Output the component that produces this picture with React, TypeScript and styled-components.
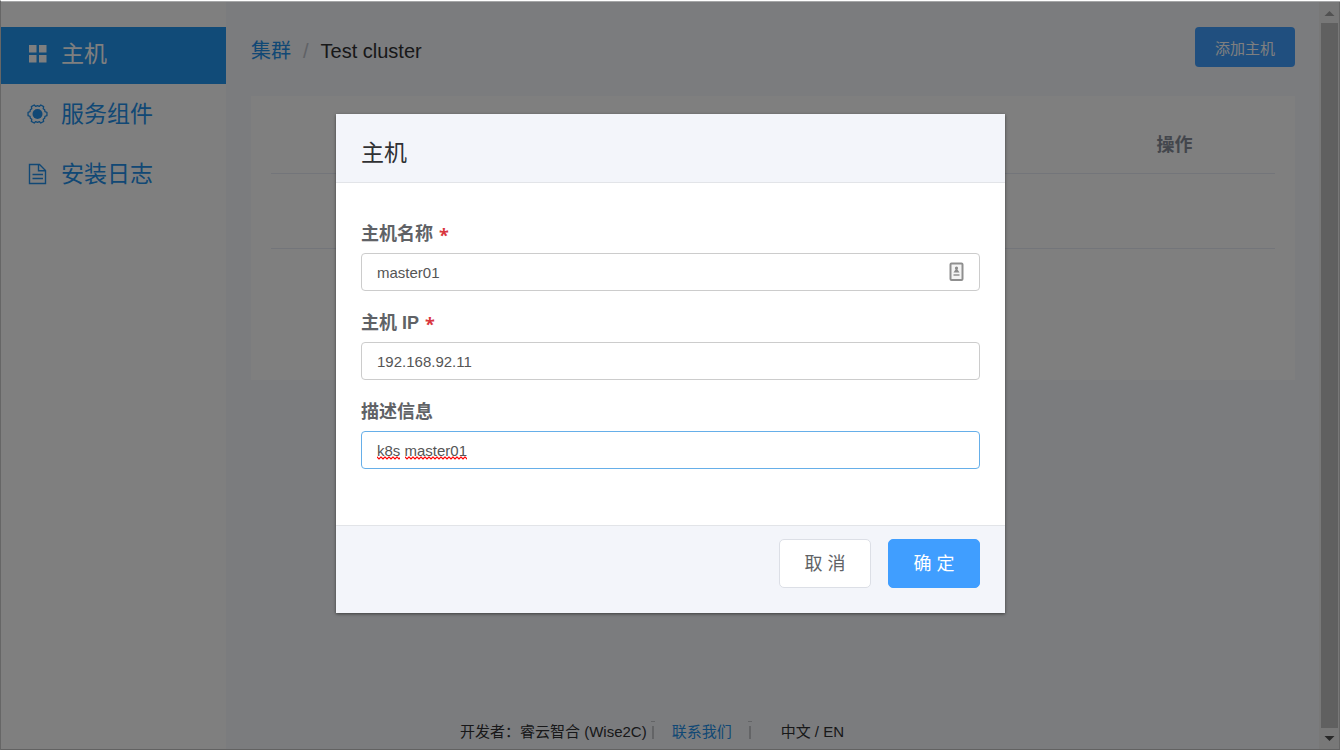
import React from 'react';
import styled, { createGlobalStyle, css } from 'styled-components';

const GlobalStyle = createGlobalStyle`
  * { box-sizing: border-box; }
  body {
    margin: 0;
    font-family: "Liberation Sans", "Noto Sans CJK SC", sans-serif;
    font-size: 15px;
    color: #303133;
  }
  button, input { font-family: inherit; margin: 0; }
  a { text-decoration: none; color: #2290ea; }
`;

const Frame = styled.div`
  position: relative;
  display: flex;
  min-height: 100vh;
  background: #f6f8fc;
  border-top: 1px solid #ffffff;
  border-left: 1px solid #666666;
`;

const Sidebar = styled.nav`
  flex: 0 0 225px;
  padding-top: 26px;
  background: #ffffff;
`;

const Menu = styled.ul`
  display: flex;
  flex-direction: column;
  gap: 3px;
  margin: 0;
  padding: 0;
  list-style: none;
`;

const MenuLink = styled.a<{ $active?: boolean }>`
  display: flex;
  align-items: center;
  gap: 12px;
  height: 57px;
  padding: 0 0 4px 26px;
  font-size: 23px;
  line-height: 34px;
  ${(p) =>
    p.$active &&
    css`
      background: #2296f0;
      color: #ffffff;
    `}
  svg { flex: none; }
`;

const Main = styled.main`
  flex: 1;
  display: flex;
  flex-direction: column;
  min-width: 0;
  padding: 26px 24px 0 25px;
`;

const TopBar = styled.header`
  display: flex;
  align-items: center;
  justify-content: space-between;
  height: 40px;
  margin-bottom: 29px;
`;

const Breadcrumb = styled.nav`
  display: flex;
  align-items: center;
  gap: 12px;
  padding-top: 8px;
  font-size: 20px;
  line-height: 30px;
`;

const Slash = styled.span`
  color: #c0c4cc;
`;

const AddButton = styled.button`
  width: 100px;
  height: 40px;
  border: 0;
  border-radius: 4px;
  background: #409eff;
  color: #ffffff;
  font-size: 15px;
  padding: 0;
`;

const Card = styled.section`
  min-height: 284px;
  padding: 20px;
  background: #ffffff;
`;

const Table = styled.table`
  width: 100%;
  table-layout: fixed;
  border-collapse: separate;
  border-spacing: 0;
  th, td {
    padding: 0;
    border-bottom: 1px solid #e6ebf5;
    text-align: center;
  }
  th {
    height: 58px;
    font-size: 18px;
    line-height: 26px;
    color: #878d99;
  }
  td { height: 75px; }
`;

const PageFooter = styled.footer`
  display: flex;
  align-items: center;
  margin: auto auto 6px 209px;
  white-space: nowrap;
  line-height: 24px;
`;

const Divider = styled.span`
  position: relative;
  width: 2px;
  height: 13px;
  margin: 0 18px 0 5px;
  background: #c6c8cc;
  &::before {
    content: "";
    position: absolute;
    left: -1px;
    top: -5px;
    width: 4px;
    height: 1px;
    background: #c6c8cc;
  }
  &:last-of-type { margin: 0 30px 0 17px; }
`;

const ScrollTrack = styled.div`
  display: flex;
  flex-direction: column;
  flex: 0 0 21px;
  padding: 0 1px 0 2px;
  background: #f1f1f1;
  border-right: 1px solid #cccccc;
  svg { display: block; flex: none; }
`;

const ScrollThumb = styled.div`
  flex: 1;
  background: #c1c1c1;
`;

const Overlay = styled.div`
  position: absolute;
  inset: 0;
  display: flex;
  justify-content: center;
  align-items: flex-start;
  padding-top: 112px;
  background: rgba(0, 0, 0, 0.5);
  border-top: 1px solid #a5a6a7;
  border-bottom: 1px solid #626262;
`;

const Dialog = styled.form`
  width: 669px;
  max-width: 100%;
  background: #ffffff;
  box-shadow: 0 1px 3px rgba(0, 0, 0, 0.5);
`;

const DialogHeader = styled.header`
  padding: 22px 25px 12px;
  background: #f3f5fa;
  border-bottom: 1px solid #e2e4e8;
`;

const DialogTitle = styled.h2`
  margin: 0;
  font-size: 23px;
  font-weight: 400;
  line-height: 34px;
`;

const DialogBody = styled.div`
  display: flex;
  flex-direction: column;
  gap: 17px;
  padding: 36px 25px 56px;
`;

const Field = styled.div`
  display: flex;
  flex-direction: column;
  gap: 3px;
`;

const Label = styled.label`
  display: flex;
  font-size: 18px;
  font-weight: 700;
  line-height: 31px;
  color: #606266;
`;

const Required = styled.span`
  padding-top: 2px;
  margin-left: 6px;
  line-height: 29px;
  font-family: "Open Sans", "Noto Sans", sans-serif;
  color: #d9363e;
`;

const InputWrap = styled.div`
  position: relative;
`;

const Input = styled.input<{ $focused?: boolean }>`
  display: block;
  width: 100%;
  height: 38px;
  padding: 0 15px;
  border: 1px solid ${(p) => (p.$focused ? '#66afe9' : '#cccccc')};
  border-radius: 4px;
  background: #ffffff;
  color: #555555;
  font-size: 15px;
  outline: none;
`;

const InputIcon = styled.span`
  position: absolute;
  right: 16px;
  top: 9px;
  svg { display: block; }
`;

const SpellMarks = styled.svg`
  position: absolute;
  left: 16px;
  top: 25px;
`;

const DialogFooter = styled.footer`
  display: flex;
  justify-content: flex-end;
  gap: 17px;
  padding: 13px 25px 25px;
  background: #f3f5fa;
  border-top: 1px solid #e2e4e8;
`;

const DialogButton = styled.button<{ $primary?: boolean }>`
  width: 92px;
  height: 49px;
  padding: 0 0 3px;
  border: 1px solid ${(p) => (p.$primary ? '#409eff' : '#dcdfe6')};
  border-radius: 5px;
  background: ${(p) => (p.$primary ? '#409eff' : '#ffffff')};
  color: ${(p) => (p.$primary ? '#ffffff' : '#606266')};
  font-size: 18px;
`;

const GridIcon = () => (
  <svg width="22" height="22" viewBox="0 0 22 22" fill="currentColor" aria-hidden="true">
    <path d="M2 2h7.5v7.5H2zM12 2h7.5v7.5H12zM2 12h7.5v7.5H2zM12 12h7.5v7.5H12z" />
  </svg>
);

// Six teeth, one every 60 degrees: [angle offset, radius] for each corner.
const toothCorners = [
  [-17, 7.8],
  [-10, 9.6],
  [10, 9.6],
  [17, 7.8],
  [30, 8.3],
];
const gearPoints = [0, 60, 120, 180, 240, 300]
  .flatMap((base) =>
    toothCorners.map(([offset, radius]) => {
      const angle = ((base + offset) * Math.PI) / 180;
      return `${(10.5 + radius * Math.cos(angle)).toFixed(2)},${(11 + radius * Math.sin(angle)).toFixed(2)}`;
    }),
  )
  .join(' ');

const GearIcon = () => (
  <svg width="22" height="22" viewBox="0 0 22 22" aria-hidden="true">
    <polygon points={gearPoints} fill="none" stroke="currentColor" strokeWidth="1.3" strokeLinejoin="round" />
    <circle cx="10.5" cy="11" r="5" fill="currentColor" />
  </svg>
);

const DocumentIcon = () => (
  <svg width="22" height="22" viewBox="0 0 22 22" fill="none" stroke="currentColor" strokeWidth="1.4" aria-hidden="true">
    <path d="M2.5 1.5h10l6 6V20.5h-16z M11.5 1.5v6.2h6.8 M5.5 11.5h10.5 M5.5 15.5h10.5" />
  </svg>
);

const AutofillIcon = () => (
  <svg width="15" height="20" viewBox="0 0 15 20" aria-hidden="true">
    <rect x="1.5" y="1.5" width="12" height="16.5" rx="1" fill="#f4f4f4" stroke="#8f8f8f" strokeWidth="2" />
    <circle cx="7.5" cy="6" r="1.6" fill="#8c8c8c" />
    <path d="M4.5 10.5 7.5 6l3 4.5z" fill="#8c8c8c" />
    <path d="M4.5 13h6" stroke="#aaaaaa" strokeWidth="2" />
  </svg>
);

const SpellWave = () => (
  <SpellMarks width="92" height="4" viewBox="0 0 92 4" aria-hidden="true">
    <defs>
      <pattern id="wave" width="4" height="4" patternUnits="userSpaceOnUse">
        <path d="M-1 .5 L0 1 L2 3 L4 1 L5 0" fill="none" stroke="#ff0000" strokeWidth="1.2" />
      </pattern>
    </defs>
    <rect x="0" width="23" height="4" fill="url(#wave)" />
    <rect x="28" width="62" height="4" fill="url(#wave)" />
  </SpellMarks>
);

const menu = [
  { text: '主机', icon: <GridIcon />, active: true },
  { text: '服务组件', icon: <GearIcon /> },
  { text: '安装日志', icon: <DocumentIcon /> },
];

export default function App() {
  return (
    <>
      <GlobalStyle />
      <Frame>
        <Sidebar>
          <Menu>
            {menu.map((item) => (
              <li key={item.text}>
                <MenuLink href="#" $active={item.active}>
                  {item.icon}
                  {item.text}
                </MenuLink>
              </li>
            ))}
          </Menu>
        </Sidebar>
        <Main>
          <TopBar>
            <Breadcrumb>
              <a href="#">集群</a>
              <Slash>/</Slash>
              <span>Test cluster</span>
            </Breadcrumb>
            <AddButton type="button">添加主机</AddButton>
          </TopBar>
          <Card>
            <Table>
              <thead>
                <tr>
                  <th />
                  <th />
                  <th />
                  <th />
                  <th scope="col">操作</th>
                </tr>
              </thead>
              <tbody>
                <tr>
                  <td />
                  <td />
                  <td />
                  <td />
                  <td />
                </tr>
              </tbody>
            </Table>
          </Card>
          <PageFooter>
            开发者：睿云智合 (Wise2C)
            <Divider />
            <a href="#">联系我们</a>
            <Divider />
            中文 / EN
          </PageFooter>
        </Main>
        <ScrollTrack aria-hidden="true">
          <svg width="17" height="22" viewBox="0 0 17 22">
            <path d="M3.5 15 8.5 10l5 5z" fill="#a3a3a3" />
          </svg>
          <ScrollThumb />
          <svg width="17" height="22" viewBox="0 0 17 22">
            <path d="M3.5 8h10l-5 5z" fill="#505050" />
          </svg>
        </ScrollTrack>
        <Overlay>
          <Dialog role="dialog" aria-labelledby="dialog-title">
            <DialogHeader>
              <DialogTitle id="dialog-title">主机</DialogTitle>
            </DialogHeader>
            <DialogBody>
              <Field>
                <Label htmlFor="host-name">
                  主机名称<Required>*</Required>
                </Label>
                <InputWrap>
                  <Input id="host-name" type="text" defaultValue="master01" />
                  <InputIcon>
                    <AutofillIcon />
                  </InputIcon>
                </InputWrap>
              </Field>
              <Field>
                <Label htmlFor="host-ip">
                  主机 IP<Required>*</Required>
                </Label>
                <InputWrap>
                  <Input id="host-ip" type="text" defaultValue="192.168.92.11" />
                </InputWrap>
              </Field>
              <Field>
                <Label htmlFor="host-desc">描述信息</Label>
                <InputWrap>
                  <Input id="host-desc" type="text" defaultValue="k8s master01" $focused />
                  <SpellWave />
                </InputWrap>
              </Field>
            </DialogBody>
            <DialogFooter>
              <DialogButton type="button">取 消</DialogButton>
              <DialogButton type="button" $primary>
                确 定
              </DialogButton>
            </DialogFooter>
          </Dialog>
        </Overlay>
      </Frame>
    </>
  );
}
